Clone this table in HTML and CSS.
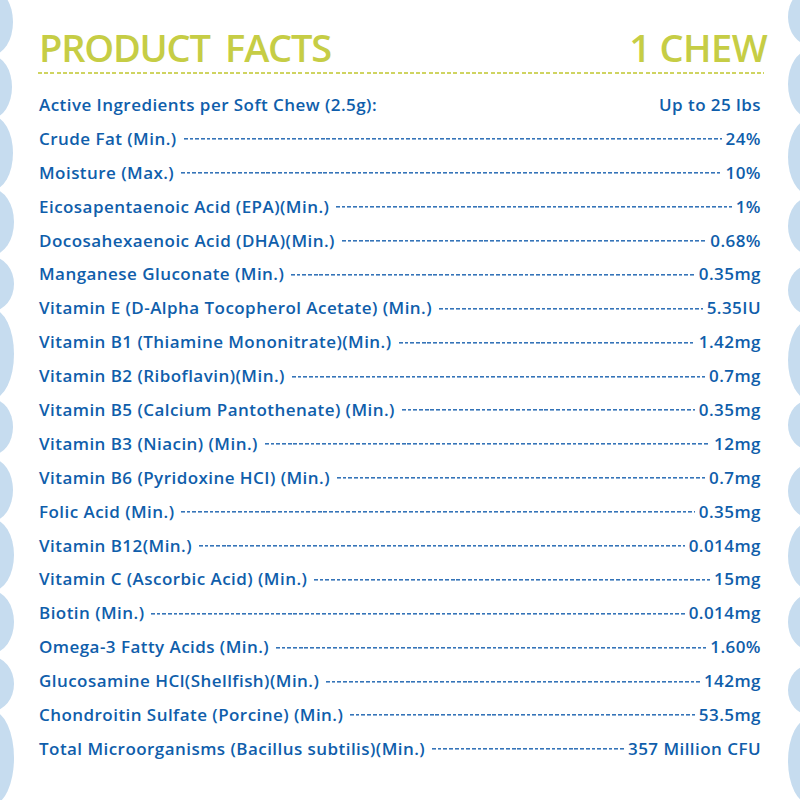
FILE: index.html
```html
<!DOCTYPE html>
<html>
<head>
<meta charset="utf-8">
<link rel="stylesheet" href="styles.css">
</head>
<body>
<div class="page">
  <svg class="edge edge-left" width="20" height="800" viewBox="0 0 20 800">
    <g fill="#c6dcef">
      <ellipse cx="-8" cy="22" rx="21" ry="33"/>
      <ellipse cx="-8" cy="87" rx="20" ry="31"/>
      <ellipse cx="-8" cy="153" rx="21" ry="37"/>
      <ellipse cx="-8" cy="222" rx="22" ry="33"/>
      <ellipse cx="-8" cy="284" rx="22" ry="27"/>
      <ellipse cx="-8" cy="354" rx="22" ry="45"/>
      <ellipse cx="-8" cy="427" rx="21" ry="28"/>
      <ellipse cx="-8" cy="490" rx="21" ry="31"/>
      <ellipse cx="-8" cy="555" rx="22" ry="36"/>
      <ellipse cx="-8" cy="622" rx="22" ry="31"/>
      <ellipse cx="-8" cy="684" rx="22" ry="27"/>
      <ellipse cx="-8" cy="758" rx="22" ry="47"/>
    </g>
  </svg>
  <svg class="edge edge-right" width="20" height="800" viewBox="0 0 20 800">
    <g fill="#c6dcef">
      <ellipse cx="30" cy="17" rx="22" ry="28"/>
      <ellipse cx="30" cy="84" rx="22" ry="34"/>
      <ellipse cx="30" cy="157" rx="22" ry="38"/>
      <ellipse cx="30" cy="226" rx="22" ry="29"/>
      <ellipse cx="30" cy="290" rx="22" ry="25"/>
      <ellipse cx="30" cy="360" rx="22" ry="40"/>
      <ellipse cx="30" cy="425" rx="22" ry="25"/>
      <ellipse cx="30" cy="491" rx="22" ry="27"/>
      <ellipse cx="30" cy="556" rx="22" ry="34"/>
      <ellipse cx="30" cy="622" rx="22" ry="28"/>
      <ellipse cx="30" cy="690" rx="22" ry="25"/>
      <ellipse cx="30" cy="761" rx="22" ry="43"/>
    </g>
  </svg>

  <div class="content">
    <div class="header">
      <h1 class="title">PRODUCT&nbsp; FACTS</h1>
      <div class="serving">1 CHEW</div>
    </div>
    <div class="header-rule"></div>

    <div class="facts">
      <div class="row head"><span class="label">Active Ingredients per Soft Chew (2.5g):</span><span class="value">Up to 25 lbs</span></div>
      <div class="row"><span class="label">Crude Fat (Min.)</span><span class="leader"></span><span class="value">24%</span></div>
      <div class="row"><span class="label">Moisture (Max.)</span><span class="leader"></span><span class="value">10%</span></div>
      <div class="row"><span class="label">Eicosapentaenoic Acid (EPA)(Min.)</span><span class="leader"></span><span class="value">1%</span></div>
      <div class="row"><span class="label">Docosahexaenoic Acid (DHA)(Min.)</span><span class="leader"></span><span class="value">0.68%</span></div>
      <div class="row"><span class="label">Manganese Gluconate (Min.)</span><span class="leader"></span><span class="value">0.35mg</span></div>
      <div class="row"><span class="label">Vitamin E (D-Alpha Tocopherol Acetate) (Min.)</span><span class="leader"></span><span class="value">5.35IU</span></div>
      <div class="row"><span class="label">Vitamin B1 (Thiamine Mononitrate)(Min.)</span><span class="leader"></span><span class="value">1.42mg</span></div>
      <div class="row"><span class="label">Vitamin B2 (Riboflavin)(Min.)</span><span class="leader"></span><span class="value">0.7mg</span></div>
      <div class="row"><span class="label">Vitamin B5 (Calcium Pantothenate) (Min.)</span><span class="leader"></span><span class="value">0.35mg</span></div>
      <div class="row"><span class="label">Vitamin B3 (Niacin) (Min.)</span><span class="leader"></span><span class="value">12mg</span></div>
      <div class="row"><span class="label">Vitamin B6 (Pyridoxine HCI) (Min.)</span><span class="leader"></span><span class="value">0.7mg</span></div>
      <div class="row"><span class="label">Folic Acid (Min.)</span><span class="leader"></span><span class="value">0.35mg</span></div>
      <div class="row"><span class="label">Vitamin B12(Min.)</span><span class="leader"></span><span class="value">0.014mg</span></div>
      <div class="row"><span class="label">Vitamin C (Ascorbic Acid) (Min.)</span><span class="leader"></span><span class="value">15mg</span></div>
      <div class="row"><span class="label">Biotin (Min.)</span><span class="leader"></span><span class="value">0.014mg</span></div>
      <div class="row"><span class="label">Omega-3 Fatty Acids (Min.)</span><span class="leader"></span><span class="value">1.60%</span></div>
      <div class="row"><span class="label">Glucosamine HCl(Shellfish)(Min.)</span><span class="leader"></span><span class="value">142mg</span></div>
      <div class="row"><span class="label">Chondroitin Sulfate (Porcine) (Min.)</span><span class="leader"></span><span class="value">53.5mg</span></div>
      <div class="row"><span class="label">Total Microorganisms (Bacillus subtilis)(Min.)</span><span class="leader"></span><span class="value">357 Million CFU</span></div>
    </div>
  </div>
</div>
</body>
</html>
```

FILE: styles.css
```css
html, body {
  margin: 0;
  padding: 0;
  background: #ffffff;
}

.page {
  position: relative;
  width: 800px;
  height: 800px;
  overflow: hidden;
  background: #ffffff;
  font-family: "Open Sans", "Noto Sans", sans-serif;
}

.edge {
  position: absolute;
  top: 0;
}

.edge-left {
  left: 0;
}

.edge-right {
  right: 0;
}

.content {
  padding: 28px 39px 0 39px;
}

.header {
  display: flex;
  justify-content: space-between;
  align-items: baseline;
}

.title {
  margin: 0;
  font-size: 38px;
  line-height: 38px;
  font-weight: 600;
  color: #c6cd45;
  letter-spacing: -1.2px;
  word-spacing: -1px;
}

.serving {
  font-size: 38px;
  line-height: 38px;
  font-weight: 600;
  color: #c6cd45;
  letter-spacing: -0.6px;
  margin-right: -6px;
}

.header-rule {
  margin: 6px -3px 0 -1px;
  height: 2px;
  background: repeating-linear-gradient(to right, #cfd461 0 4px, transparent 4px 6.2px);
}

.facts {
  margin-top: 14px;
  display: flex;
  flex-direction: column;
}

.row {
  display: flex;
  align-items: baseline;
  height: 33.9px;
  line-height: 33.9px;
  font-size: 17px;
  font-weight: 600;
  letter-spacing: 0.45px;
  color: #0f5eab;
  white-space: nowrap;
}

.head {
  justify-content: space-between;
}

.label {
  flex: none;
}

.leader {
  flex: 1;
  align-self: stretch;
  margin: 0 4px 0 7px;
  background: repeating-linear-gradient(to right, #3574b8 0 3.7px, transparent 3.7px 5.7px);
  background-size: 100% 1.6px;
  background-position: 0 16.4px;
  background-repeat: no-repeat;
}

.value {
  flex: none;
}
```
